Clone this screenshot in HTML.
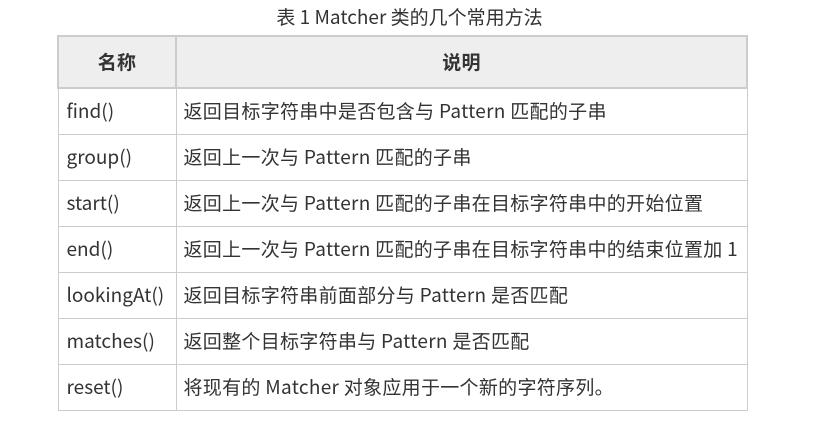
<!DOCTYPE html>
<html><head><meta charset="utf-8"><style>
html,body{margin:0;padding:0;background:#fff;width:819px;height:421px;overflow:hidden}
body{font-family:"Noto Sans CJK SC",sans-serif;color:#333}
.t{position:absolute;top:5px;left:0;width:819px;text-align:center;font-size:19px;line-height:24px}
table{position:absolute;left:57px;top:35px;border-collapse:collapse;width:691px;font-size:19px;line-height:22px;letter-spacing:0.3px}
td,th{border:1px solid #ccc;padding:0 0 2px 7px;text-align:left;height:43px;vertical-align:middle}
th{background:#eee;text-align:center;height:50px;border-width:2px;font-weight:bold;padding:0}
td:first-child{padding-left:8px;letter-spacing:0}
</style></head><body>
<div class="t">表 1 Matcher 类的几个常用方法</div>
<table>
<tr><th style="width:116px">名称</th><th>说明</th></tr>
<tr><td>find()</td><td>返回目标字符串中是否包含与 Pattern 匹配的子串</td></tr>
<tr><td>group()</td><td>返回上一次与 Pattern 匹配的子串</td></tr>
<tr><td>start()</td><td>返回上一次与 Pattern 匹配的子串在目标字符串中的开始位置</td></tr>
<tr><td>end()</td><td>返回上一次与 Pattern 匹配的子串在目标字符串中的结束位置加 1</td></tr>
<tr><td>lookingAt()</td><td>返回目标字符串前面部分与 Pattern 是否匹配</td></tr>
<tr><td>matches()</td><td>返回整个目标字符串与 Pattern 是否匹配</td></tr>
<tr><td>reset()</td><td>将现有的 Matcher 对象应用于一个新的字符序列。</td></tr>
</table>
</body></html>
